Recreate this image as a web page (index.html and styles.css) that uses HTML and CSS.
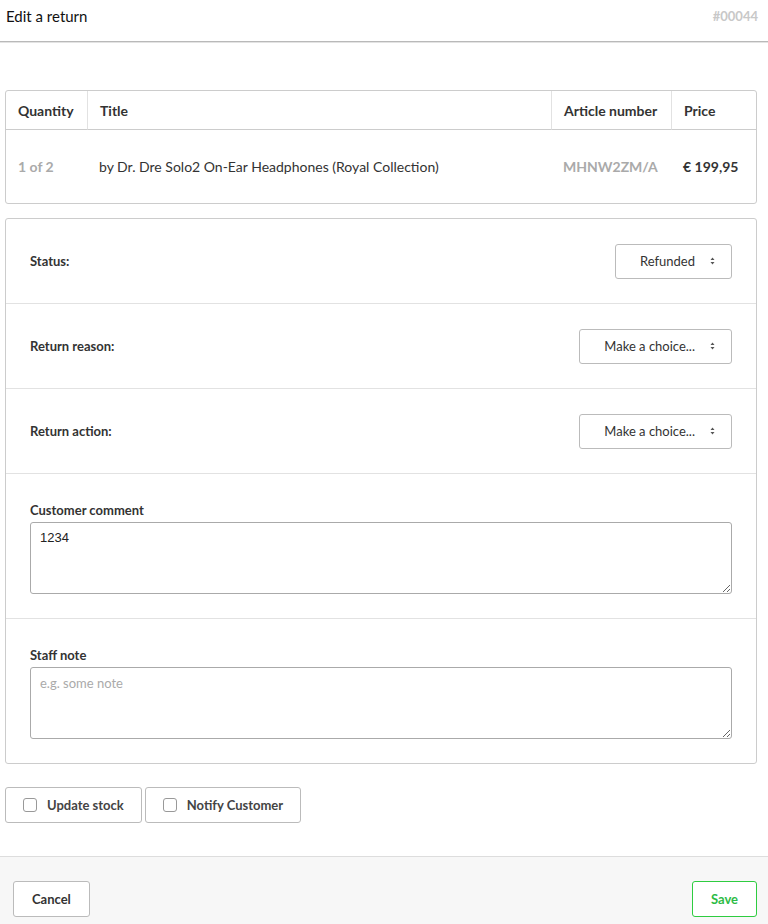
FILE: index.html
```html
<!DOCTYPE html>
<html lang="en">
<head>
  <meta charset="UTF-8">
  <meta name="viewport" content="width=device-width, initial-scale=1.0">
  <title>Edit a return</title>
  <link rel="stylesheet" href="styles.css">
</head>
<body>
  <header class="topbar">
    <h1 class="topbar-title">Edit a return</h1>
    <span class="topbar-id">#00044</span>
  </header>

  <main class="content">
    <table class="items">
      <thead>
        <tr>
          <th class="col-qty">Quantity</th>
          <th class="col-title">Title</th>
          <th class="col-article">Article number</th>
          <th class="col-price">Price</th>
        </tr>
      </thead>
      <tbody>
        <tr>
          <td class="muted">1 of 2</td>
          <td>by Dr. Dre Solo2 On-Ear Headphones (Royal Collection)</td>
          <td class="muted">MHNW2ZM/A</td>
          <td class="strong">&euro; 199,95</td>
        </tr>
      </tbody>
    </table>

    <section class="form-box">
      <div class="form-row inline">
        <label class="label">Status:</label>
        <button class="select">Refunded <svg class="arrows" width="5" height="8" viewBox="0 0 5 8"><path d="M2.5 0.5 L4.5 3 L0.5 3 Z M2.5 7.5 L4.5 5 L0.5 5 Z" fill="#555"/></svg></button>
      </div>
      <div class="form-row inline">
        <label class="label">Return reason:</label>
        <button class="select">Make a choice... <svg class="arrows" width="5" height="8" viewBox="0 0 5 8"><path d="M2.5 0.5 L4.5 3 L0.5 3 Z M2.5 7.5 L4.5 5 L0.5 5 Z" fill="#555"/></svg></button>
      </div>
      <div class="form-row inline">
        <label class="label">Return action:</label>
        <button class="select">Make a choice... <svg class="arrows" width="5" height="8" viewBox="0 0 5 8"><path d="M2.5 0.5 L4.5 3 L0.5 3 Z M2.5 7.5 L4.5 5 L0.5 5 Z" fill="#555"/></svg></button>
      </div>
      <div class="form-row stacked">
        <label class="label">Customer comment</label>
        <textarea class="textarea">1234</textarea>
      </div>
      <div class="form-row stacked">
        <label class="label">Staff note</label>
        <textarea class="textarea" placeholder="e.g. some note"></textarea>
      </div>
    </section>

    <div class="checks">
      <label class="check-btn"><span class="box"></span>Update stock</label>
      <label class="check-btn"><span class="box"></span>Notify Customer</label>
    </div>
  </main>

  <footer class="footer">
    <button class="btn">Cancel</button>
    <button class="btn btn-save">Save</button>
  </footer>
</body>
</html>
```

FILE: styles.css
```css
body {
  margin: 0;
  font-family: Lato, "Open Sans", sans-serif;
  color: #333;
  background: white;
}

.topbar {
  height: 42px;
  box-sizing: border-box;
  display: flex;
  align-items: flex-start;
  justify-content: space-between;
  padding: 6px 10px 0 6px;
  border-bottom: 1px solid #b9b9b9;
  box-shadow: 0 1px 0 #e3e3e3;
}

.topbar-title {
  margin: 0;
  font-size: 15px;
  line-height: 20px;
  font-weight: normal;
  color: #111;
}

.topbar-id {
  font-size: 13px;
  line-height: 20px;
  font-weight: bold;
  color: #c8c8c8;
}

.content {
  padding: 48px 11px 33px 5px;
}

.items {
  width: 100%;
  border-collapse: separate;
  border-spacing: 0;
  border: 1px solid #ccc;
  border-radius: 3px;
  font-size: 14px;
}

.items th {
  height: 38px;
  padding: 0 12px;
  text-align: left;
  font-weight: bold;
  color: #333;
  border-bottom: 1px solid #ccc;
  border-left: 1px solid #e2e2e2;
}

.items th:first-child {
  border-left: none;
}

.col-qty { width: 57px; }
.col-article { width: 95px; }
.col-price { width: 60px; }

.items td {
  height: 73px;
  padding: 0 12px;
  color: #333;
}

.items .muted {
  color: #aaa;
  font-weight: bold;
}

.items .strong {
  font-weight: bold;
}

.form-box {
  margin-top: 14px;
  border: 1px solid #ccc;
  border-radius: 3px;
}

.form-row {
  padding: 0 24px;
  border-top: 1px solid #e2e2e2;
}

.form-row:first-child {
  border-top: none;
}

.inline {
  height: 84px;
  display: flex;
  align-items: center;
  justify-content: space-between;
}

.stacked {
  padding-top: 28px;
  padding-bottom: 24px;
}

.label {
  display: block;
  font-size: 13px;
  font-weight: bold;
  color: #333;
}

.stacked .label {
  margin-bottom: 4px;
}

.select {
  height: 35px;
  padding: 0 16px 0 24px;
  background: white;
  border: 1px solid #bbb;
  border-radius: 3px;
  font-family: Lato, sans-serif;
  font-size: 13px;
  color: #333;
  display: flex;
  align-items: center;
}

.arrows {
  margin-left: 15px;
}

.textarea {
  display: block;
  box-sizing: border-box;
  width: 100%;
  height: 72px;
  padding: 7px 9px 6px;
  border: 1px solid #aaa;
  border-radius: 3px;
  font-family: "Liberation Sans", Arial, sans-serif;
  font-size: 13px;
  color: #222;
  resize: vertical;
}

.textarea::placeholder {
  font-family: Lato, sans-serif;
  color: #aaa;
}

.checks {
  margin-top: 23px;
  display: flex;
  gap: 3px;
}

.check-btn {
  height: 34px;
  display: flex;
  align-items: center;
  padding: 0 17px;
  border: 1px solid #bbb;
  border-radius: 3px;
  font-size: 13px;
  font-weight: bold;
  color: #444;
}

.box {
  width: 12px;
  height: 12px;
  border: 1px solid #999;
  border-radius: 3px;
  margin-right: 10px;
}

.footer {
  background: #f7f7f7;
  border-top: 1px solid #ddd;
  padding: 24px 11px 20px 13px;
  display: flex;
  justify-content: space-between;
}

.btn {
  height: 36px;
  padding: 0 18px;
  background: white;
  border: 1px solid #bbb;
  border-radius: 3px;
  font-family: Lato, sans-serif;
  font-size: 13px;
  font-weight: bold;
  color: #333;
}

.btn-save {
  border-color: #2ecc40;
  color: #2dbb45;
}
```
